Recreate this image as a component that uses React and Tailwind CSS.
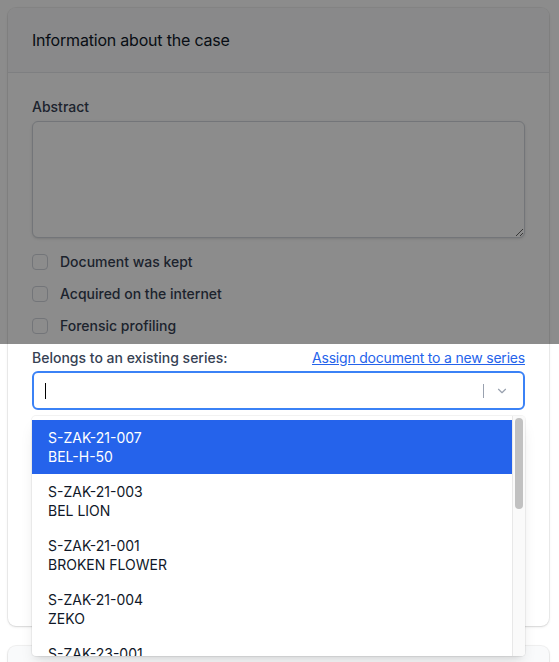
import { ChevronDown } from 'lucide-react';

const options = [
    ['S-ZAK-21-007', 'BEL-H-50'],
    ['S-ZAK-21-003', 'BEL LION'],
    ['S-ZAK-21-001', 'BROKEN FLOWER'],
    ['S-ZAK-21-004', 'ZEKO'],
    ['S-ZAK-23-001', 'NOVA'],
];

const checks = ['Document was kept', 'Acquired on the internet', 'Forensic profiling'];

export default function App() {
    return (
        <div className="relative h-screen bg-white pt-2 pl-2 pr-[10px] font-['Inter','Liberation_Sans',sans-serif] text-gray-900 overflow-hidden">
            <div className="rounded-lg bg-white shadow ring-1 ring-black/5">
                <div className="bg-gray-50 border-b border-gray-200 rounded-t-lg px-6 py-5">
                    <h3 className="text-base leading-6 tracking-[-0.2px] text-gray-900">Information about the case</h3>
                </div>
                <div className="px-6 pt-6 pb-6">
                    <label className="block text-sm leading-5 font-medium text-gray-700">Abstract</label>
                    <textarea className="mt-1 block w-full h-[117px] rounded-md border border-gray-300 bg-white shadow-sm resize-y" />

                    <div className="mt-[14px] flex flex-col gap-3">
                        {checks.map((c) => (
                            <div key={c} className="flex items-center gap-3 h-5">
                                <span className="w-4 h-4 rounded border border-gray-300 bg-white" />
                                <span className="text-sm leading-5 font-medium text-gray-700">{c}</span>
                            </div>
                        ))}
                    </div>

                    <div className="mt-3 flex items-center justify-between">
                        <span className="text-sm leading-5 font-medium text-gray-700">Belongs to an existing series:</span>
                        <a className="text-sm leading-5 tracking-[-0.2px] text-[#2563eb] underline">Assign document to a new series</a>
                    </div>

                    <div className="relative mt-[3px]">
                        <div className="flex items-center h-[39px] rounded-md border-2 border-[#3b82f6] bg-white">
                            <div className="flex-1 pl-[11px]">
                                <span className="block w-px h-4 bg-black" />
                            </div>
                            <span className="w-px h-[14px] bg-gray-400" />
                            <ChevronDown className="w-[14px] h-[14px] text-gray-400 ml-[11px] mr-[14px]" strokeWidth={2} />
                        </div>

                        <div className="absolute left-0 right-0 top-[45px] z-20 h-[240px] flex overflow-hidden rounded bg-white shadow-lg ring-1 ring-black/5">
                            <div className="flex-1 py-1">
                                {options.map(([code, name], i) => (
                                    <div
                                        key={code}
                                        className={
                                            i === 0
                                                ? 'px-4 py-2 text-sm leading-[19px] bg-[#2563eb] text-white'
                                                : 'px-4 py-2 text-sm leading-[19px] text-gray-900'
                                        }
                                    >
                                        <div>{code}</div>
                                        <div>{name}</div>
                                    </div>
                                ))}
                            </div>
                            <div className="w-[13px] bg-[#fafafa] border-l border-[#e8e8e8] pt-[2px]">
                                <div className="ml-[2px] w-[8px] h-[91px] rounded-full bg-[#c1c1c1]" />
                            </div>
                        </div>
                    </div>

                    <div className="h-[192px]" />
                </div>
            </div>

            <div className="mt-5 h-16 rounded-lg bg-gray-50 shadow ring-1 ring-black/5" />

            <div className="absolute top-0 left-0 right-0 h-[344px] bg-black/45 z-10" />
        </div>
    );
}
